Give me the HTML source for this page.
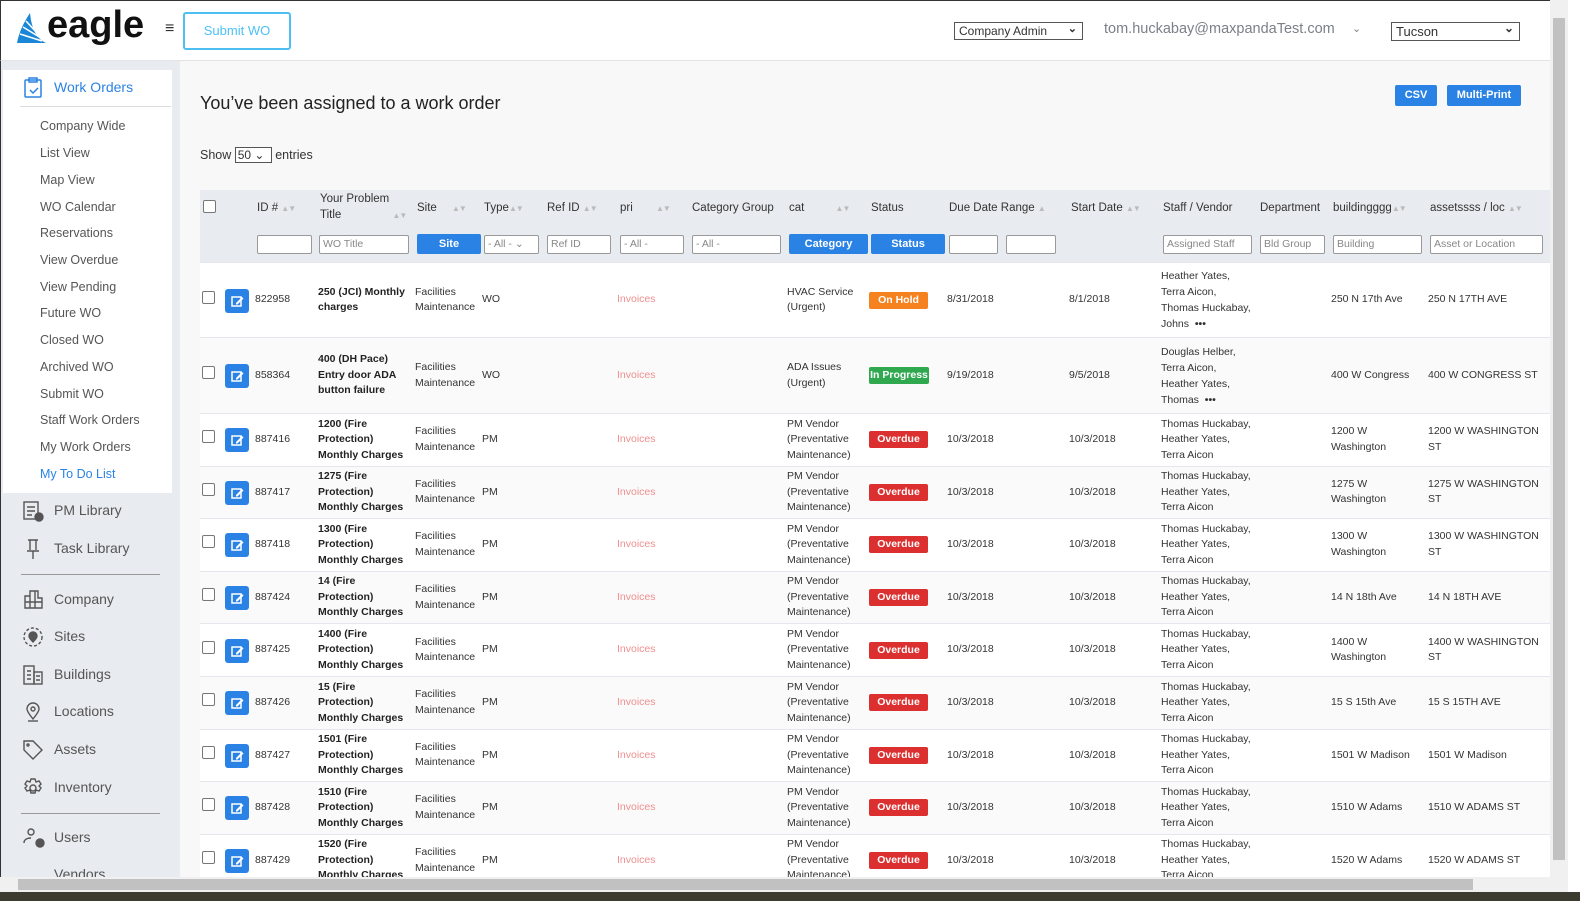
<!DOCTYPE html>
<html><head><meta charset="utf-8">
<style>
*{box-sizing:border-box;margin:0;padding:0}
body{width:1580px;height:901px;overflow:hidden;font-family:"Liberation Sans",sans-serif;background:#f8f8f8;position:relative;color:#333}
.abs{position:absolute}
#top{left:0;top:0;width:1550px;height:61px;background:#fff;border-bottom:1px solid #e3e3e3;border-top:1px solid #333;border-left:1px solid #333}
#side{left:0;top:61px;width:180px;height:816px;background:#e8ebef;border-left:1px solid #333}
#panel{left:3px;top:70px;width:169px;height:423px;background:#fff}
.sub{position:absolute;left:40px;font-size:12.5px;color:#555}
.nav{position:absolute;left:54px;font-size:14px;color:#555}
.ic{position:absolute;left:22px}
.hdr{left:200px;top:190px;width:1350px;height:72px;background:#e8ebef}
.th{position:absolute;font-size:11.5px;color:#333;line-height:16px;white-space:nowrap}
.sa{color:#bbb;font-size:8px;letter-spacing:-1px}
.inp{position:absolute;top:235px;height:19px;border:1px solid #999;background:#fff;font-size:10.5px;color:#888;padding:2px 3px;border-radius:2px;white-space:nowrap;overflow:hidden}
.bb{position:absolute;top:234px;height:20px;background:#2a83e4;color:#fff;font-size:11px;font-weight:bold;text-align:center;line-height:20px;border-radius:2px}
.row{position:absolute;left:200px;width:1350px;border-top:1px solid #e6e6ee}
.c{position:absolute;top:0;height:100%;display:flex;align-items:center;font-size:10.5px;line-height:15.5px;color:#333;white-space:nowrap}
.b{font-weight:bold;color:#222}
.cb{position:absolute;width:13px;height:13px;border:1px solid #777;border-radius:2px;background:#fff}
.ed{position:absolute;width:24px;height:24px;background:#2a83e4;border-radius:3px}
.inv{color:#ef8f8f}
.st{color:#fff;font-weight:bold;font-size:10.5px;padding:1px 0;text-align:center;border-radius:2px;line-height:15px;white-space:nowrap}
</style></head><body>
<div id="top" class="abs"></div>
<svg class="abs" style="left:16px;top:12px" width="32" height="34" viewBox="0 0 32 34"><path d="M14 1 C8 10 3 20 1 31 L30 31 C22 27 16 20 14 1Z" fill="#1a86d8"/><path d="M4 22 L26 29 M7 15 L25 26 M10 9 L22 22" stroke="#fff" stroke-width="1.6"/></svg>
<div class="abs" style="left:47px;top:4px;font-size:38px;font-weight:bold;color:#111">eagle</div>
<div class="abs" style="left:165px;top:20px;font-size:16px;font-weight:bold">≡</div>
<div class="abs" style="left:183px;top:12px;width:108px;height:38px;border:2px solid #4cc0f3;border-radius:3px;color:#4cc0f3;font-size:13px;text-align:center;line-height:34px">Submit WO</div>
<div class="abs" style="left:954px;top:22px;width:129px;height:18px;border:1px solid #555;font-size:12px;padding-left:4px;line-height:16px;background:#fff">Company Admin<span style="position:absolute;right:5px;top:-2px;font-size:11px;font-weight:bold">&#8964;</span></div>
<div class="abs" style="left:1104px;top:21px;font-size:14.5px;color:#7b8087">tom.huckabay@maxpandaTest.com</div>
<div class="abs" style="left:1352px;top:22px;font-size:11px;color:#7b8087">&#8964;</div>
<div class="abs" style="left:1391px;top:22px;width:129px;height:19px;border:1px solid #555;font-size:13px;padding-left:4px;line-height:17px;background:#fff">Tucson<span style="position:absolute;right:5px;top:-3px;font-size:12px;font-weight:bold">&#8964;</span></div>

<div id="side" class="abs"></div>
<div id="panel" class="abs"></div>
<svg class="ic" style="top:77px" width="22" height="22" viewBox="0 0 22 22" fill="none" stroke="#2a83e4" stroke-width="1.5"><rect x="3" y="3" width="16" height="17" rx="1"/><rect x="7" y="1" width="8" height="4"/><path d="M8 13 l3 3 l5 -5"/></svg>
<div class="nav" style="left:54px;top:79px;color:#2a83e4">Work Orders</div>
<div class="abs" style="left:20px;top:106px;width:151px;height:1px;background:#ddd"></div>
<div class="sub" style="top:119px">Company Wide</div>
<div class="sub" style="top:146px">List View</div>
<div class="sub" style="top:173px">Map View</div>
<div class="sub" style="top:200px">WO Calendar</div>
<div class="sub" style="top:226px">Reservations</div>
<div class="sub" style="top:253px">View Overdue</div>
<div class="sub" style="top:280px">View Pending</div>
<div class="sub" style="top:306px">Future WO</div>
<div class="sub" style="top:333px">Closed WO</div>
<div class="sub" style="top:360px">Archived WO</div>
<div class="sub" style="top:387px">Submit WO</div>
<div class="sub" style="top:413px">Staff Work Orders</div>
<div class="sub" style="top:440px">My Work Orders</div>
<div class="sub" style="top:467px;color:#2a83e4">My To Do List</div>
<svg class="ic" style="top:500px" width="22" height="22" viewBox="0 0 22 22" fill="none" stroke="#555" stroke-width="1.4"><rect x="2" y="2" width="14" height="17"/><path d="M5 7h8M5 11h8M5 15h5"/><circle cx="17" cy="17" r="4" fill="#555"/></svg>
<div class="nav" style="top:502px">PM Library</div>
<svg class="ic" style="top:538px" width="22" height="22" viewBox="0 0 22 22" fill="none" stroke="#555" stroke-width="1.4"><path d="M6 2h10M8 2v10M14 2v10M5 13h12M11 13v8"/></svg>
<div class="nav" style="top:540px">Task Library</div>
<div class="abs" style="left:21px;top:574px;width:139px;height:1px;background:#999"></div>
<svg class="ic" style="top:588px" width="22" height="22" viewBox="0 0 22 22" fill="none" stroke="#555" stroke-width="1.4"><path d="M3 20V8h5V3h8v7h4v10zM3 14h17M8 8v12M13 3v17"/></svg>
<div class="nav" style="top:591px">Company</div>
<svg class="ic" style="top:626px" width="22" height="22" viewBox="0 0 22 22" fill="none" stroke="#555" stroke-width="1.4"><circle cx="11" cy="11" r="9" stroke-dasharray="3 2"/><path d="M11 16c-3-3-4-5-4-6a4 4 0 0 1 8 0c0 1-1 3-4 6z" fill="#555"/></svg>
<div class="nav" style="top:628px">Sites</div>
<svg class="ic" style="top:664px" width="22" height="22" viewBox="0 0 22 22" fill="none" stroke="#555" stroke-width="1.4"><rect x="2" y="2" width="10" height="18"/><rect x="12" y="8" width="8" height="12"/><path d="M5 7h4M5 11h4M5 15h4M14 12h4M14 16h4"/></svg>
<div class="nav" style="top:666px">Buildings</div>
<svg class="ic" style="top:701px" width="22" height="22" viewBox="0 0 22 22" fill="none" stroke="#555" stroke-width="1.4"><path d="M11 18c-4-5-6-8-6-10a6 6 0 0 1 12 0c0 2-2 5-6 10z"/><circle cx="11" cy="8" r="2"/><path d="M6 20h10"/></svg>
<div class="nav" style="top:703px">Locations</div>
<svg class="ic" style="top:739px" width="22" height="22" viewBox="0 0 22 22" fill="none" stroke="#555" stroke-width="1.4"><path d="M2 2h9l9 9-9 9-9-9z"/><circle cx="6" cy="6" r="1"/></svg>
<div class="nav" style="top:741px">Assets</div>
<svg class="ic" style="top:777px" width="22" height="22" viewBox="0 0 22 22" fill="none" stroke="#555" stroke-width="1.4"><circle cx="11" cy="11" r="3"/><path d="M9 2h4l1 3 3-1 2 3-2 2 2 2-2 3-3-1-1 3H9l-1-3-3 1-2-3 2-2-2-2 2-3 3 1z"/></svg>
<div class="nav" style="top:779px">Inventory</div>
<div class="abs" style="left:21px;top:813px;width:139px;height:1px;background:#999"></div>
<svg class="ic" style="top:826px" width="24" height="22" viewBox="0 0 24 22" fill="none" stroke="#555" stroke-width="1.4"><circle cx="9" cy="6" r="3"/><path d="M2 17c0-4 4-5 7-5"/><circle cx="18" cy="17" r="4" fill="#555"/></svg>
<div class="nav" style="top:829px">Users</div>
<div class="nav" style="top:866px">Vendors</div>

<div class="abs" style="left:200px;top:93px;font-size:18px;color:#222">You’ve been assigned to a work order</div>
<div class="abs" style="left:1395px;top:85px;width:42px;height:21px;background:#2a83e4;color:#fff;font-size:11px;font-weight:bold;text-align:center;line-height:21px;border-radius:2px">CSV</div>
<div class="abs" style="left:1447px;top:85px;width:74px;height:21px;background:#2a83e4;color:#fff;font-size:11px;font-weight:bold;text-align:center;line-height:21px;border-radius:2px">Multi-Print</div>
<div class="abs" style="left:200px;top:147px;font-size:12.5px">Show <span style="display:inline-block;border:1px solid #555;padding:0 2px;width:37px;font-size:12px;background:#fff">50 &#8964;</span> entries</div>

<div class="abs hdr"></div>
<div class="cb" style="left:203px;top:200px"></div>
<div class="th" style="left:257px;top:200px">ID # <span class="sa">▲▼</span></div>
<div class="th" style="left:320px;top:191px">Your Problem<br>Title <span class="sa" style="margin-left:48px">▲▼</span></div>
<div class="th" style="left:417px;top:200px">Site <span class="sa" style="margin-left:12px">▲▼</span></div>
<div class="th" style="left:484px;top:200px">Type<span class="sa">▲▼</span></div>
<div class="th" style="left:547px;top:200px">Ref ID <span class="sa">▲▼</span></div>
<div class="th" style="left:620px;top:200px">pri <span class="sa" style="margin-left:20px">▲▼</span></div>
<div class="th" style="left:692px;top:200px">Category Group</div>
<div class="th" style="left:789px;top:200px">cat <span class="sa" style="margin-left:28px">▲▼</span></div>
<div class="th" style="left:871px;top:200px">Status</div>
<div class="th" style="left:949px;top:200px">Due Date Range <span class="sa">▲</span></div>
<div class="th" style="left:1071px;top:200px">Start Date <span class="sa">▲▼</span></div>
<div class="th" style="left:1163px;top:200px">Staff / Vendor</div>
<div class="th" style="left:1260px;top:200px">Department</div>
<div class="th" style="left:1333px;top:200px">buildingggg<span class="sa">▲▼</span></div>
<div class="th" style="left:1430px;top:200px">assetssss / loc <span class="sa">▲▼</span></div>

<div class="inp" style="left:257px;width:55px"></div>
<div class="inp" style="left:319px;width:90px">WO Title</div>
<div class="bb" style="left:417px;width:64px">Site</div>
<div class="inp" style="left:484px;width:55px">- All - &#8964;</div>
<div class="inp" style="left:547px;width:64px">Ref ID</div>
<div class="inp" style="left:620px;width:64px">- All -</div>
<div class="inp" style="left:692px;width:89px">- All -</div>
<div class="bb" style="left:789px;width:79px">Category</div>
<div class="bb" style="left:871px;width:74px">Status</div>
<div class="inp" style="left:949px;width:49px"></div>
<div class="inp" style="left:1006px;width:50px"></div>
<div class="inp" style="left:1163px;width:89px">Assigned Staff</div>
<div class="inp" style="left:1260px;width:65px">Bld Group</div>
<div class="inp" style="left:1333px;width:89px">Building</div>
<div class="inp" style="left:1430px;width:113px">Asset or Location</div>

<div id="rows"></div>
<script>
const edit='<svg width="24" height="24" viewBox="0 0 24 24"><rect x="7" y="8" width="9" height="9" fill="none" stroke="#fff" stroke-width="1.5"/><path d="M11 14l6-6 1.5 1.5-6 6h-1.5z" fill="#fff"/></svg>';
const rows=[
[262,75,'822958','250 (JCI) Monthly<br>charges','WO','HVAC Service<br>(Urgent)',['On Hold','#f5821f'],'8/31/2018','8/1/2018','Heather Yates,<br>Terra Aicon,<br>Thomas Huckabay,<br>Johns &nbsp;<b>•••</b>','250 N 17th Ave','250 N 17TH AVE',1],
[337,76,'858364','400 (DH Pace)<br>Entry door ADA<br>button failure','WO','ADA Issues<br>(Urgent)',['In Progress','#2fa84f'],'9/19/2018','9/5/2018','Douglas Helber,<br>Terra Aicon,<br>Heather Yates,<br>Thomas &nbsp;<b>•••</b>','400 W Congress','400 W CONGRESS ST',0]];
const pm=[['887416','1200','1200 W<br>Washington','1200 W WASHINGTON<br>ST'],['887417','1275','1275 W<br>Washington','1275 W WASHINGTON<br>ST'],['887418','1300','1300 W<br>Washington','1300 W WASHINGTON<br>ST'],['887424','14','14 N 18th Ave','14 N 18TH AVE'],['887425','1400','1400 W<br>Washington','1400 W WASHINGTON<br>ST'],['887426','15','15 S 15th Ave','15 S 15TH AVE'],['887427','1501','1501 W Madison','1501 W Madison'],['887428','1510','1510 W Adams','1510 W ADAMS ST'],['887429','1520','1520 W Adams','1520 W ADAMS ST']];
pm.forEach((p,i)=>rows.push([413+i*52.6,52.6,p[0],p[1]+' (Fire<br>Protection)<br>Monthly Charges','PM','PM Vendor<br>(Preventative<br>Maintenance)',['Overdue','#dc2f2f'],'10/3/2018','10/3/2018','Thomas Huckabay,<br>Heather Yates,<br>Terra Aicon',p[2],p[3],i%2==0]));
let h='';
rows.forEach(r=>{
const lh=r[1]>70?'line-height:16px':'';
h+=`<div class="row" style="top:${r[0]}px;height:${r[1]}px;background:${r[12]?'#fff':'#fafafa'}">
<div class="cb" style="left:2px;top:${r[1]/2-10}px"></div>
<div class="ed" style="left:25px;top:${r[1]/2-12}px">${edit}</div>
<div class="c" style="left:55px"><div>${r[2]}</div></div>
<div class="c b" style="left:118px"><div>${r[3]}</div></div>
<div class="c" style="left:215px"><div>Facilities<br>Maintenance</div></div>
<div class="c" style="left:282px"><div>${r[4]}</div></div>
<div class="c inv" style="left:417px"><div>Invoices</div></div>
<div class="c" style="left:587px"><div>${r[5]}</div></div>
<div class="c" style="left:669px"><div class="st" style="background:${r[6][1]};width:${r[6][0]=='In Progress'?60:59}px">${r[6][0]}</div></div>
<div class="c" style="left:747px"><div>${r[7]}</div></div>
<div class="c" style="left:869px"><div>${r[8]}</div></div>
<div class="c" style="left:961px;${lh}"><div>${r[9]}</div></div>
<div class="c" style="left:1131px"><div>${r[10]}</div></div>
<div class="c" style="left:1228px"><div>${r[11]}</div></div>
</div>`;});
document.getElementById('rows').innerHTML=h;
</script>
<div class="abs" style="left:1550px;top:0;width:18px;height:877px;background:#f0f0f0"></div>
<div class="abs" style="left:1553px;top:18px;width:12px;height:842px;background:#c1c1c1"></div>
<div class="abs" style="left:1568px;top:0;width:12px;height:901px;background:#fff"></div>
<div class="abs" style="left:0;top:877px;width:1568px;height:15px;background:#f0f0f0"></div>
<div class="abs" style="left:18px;top:879px;width:1455px;height:11px;background:#c1c1c1"></div>
<div class="abs" style="left:0;top:892px;width:1580px;height:9px;background:#3b3b30"></div>
</body></html>
